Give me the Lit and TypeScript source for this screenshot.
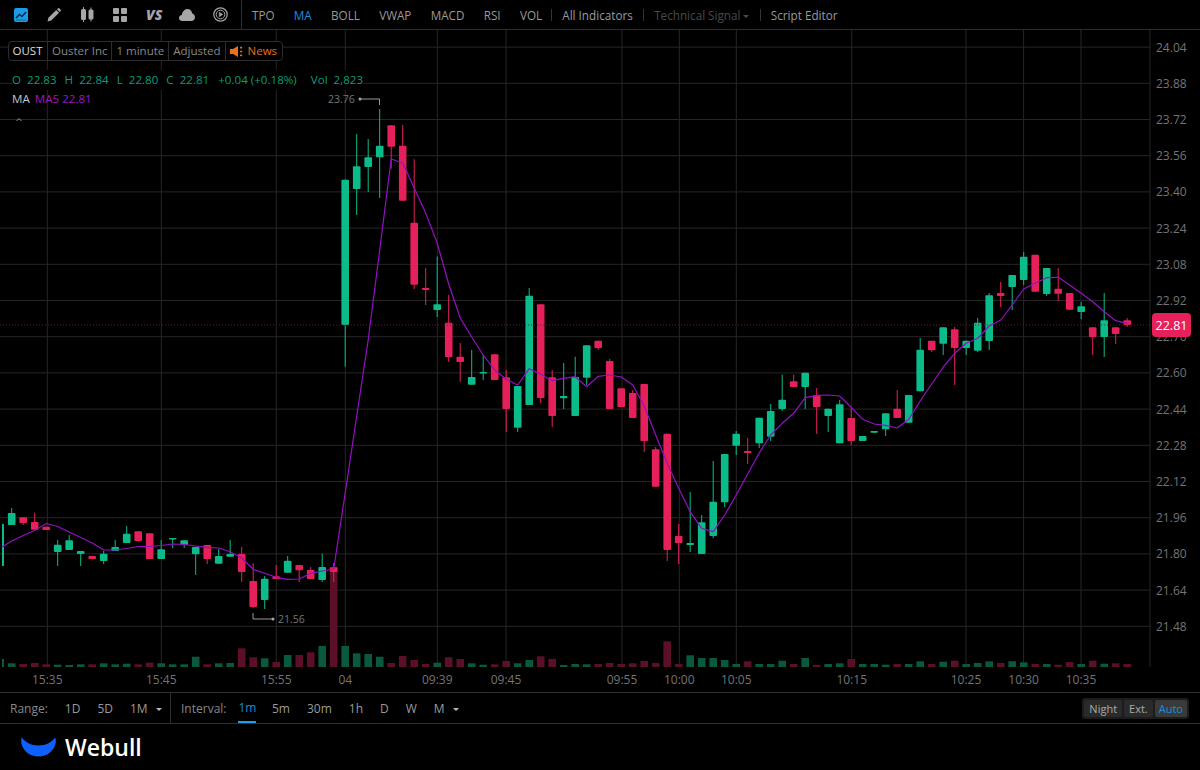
import { LitElement, css, html, svg } from 'lit'
import { customElement } from 'lit/decorators.js'

// bodyTop, bodyBottom, wickTop, wickBottom, colour: all read off the picture, in page pixels
type Candle = [number, number, number, number, 'g' | 'r']

const candles: Candle[] = [
  [524, 566, 524, 566, 'g'], [513, 525, 508, 525, 'g'], [517.3, 523, 517.3, 525, 'r'], [522, 529.7, 512.7, 529.7, 'r'],
  [526.7, 530, 526.7, 530, 'r'], [544.7, 552, 540, 566, 'g'], [540.3, 550, 535, 550, 'g'], [551, 554, 551, 566, 'g'],
  [556, 559, 556, 559, 'r'], [553.7, 561, 551, 564, 'g'], [547, 551, 540, 551, 'g'], [533.7, 543, 526, 543, 'g'],
  [531.3, 541, 531.3, 541, 'r'], [533.3, 559, 533.3, 559, 'r'], [549.3, 559, 540, 559, 'g'], [538, 539.5, 538, 548, 'g'],
  [540.3, 545, 540.3, 548, 'g'], [547, 554.3, 547, 575, 'g'], [545, 559, 545, 564, 'r'], [556, 563.7, 549, 563.7, 'g'],
  [554, 556.7, 540, 556.7, 'g'], [554, 572, 547, 582, 'r'], [581, 607, 563, 608, 'r'], [578.7, 600, 576, 609, 'g'],
  [576.3, 579, 565, 579, 'r'], [560.7, 572.7, 556, 572.7, 'g'], [565, 570.3, 565, 582, 'r'], [570, 579, 567, 579, 'r'],
  [567, 580, 553.7, 582, 'g'], [567.3, 572, 563, 582, 'r'], [179.7, 325, 179.7, 366.7, 'g'], [166.3, 189, 134, 215, 'g'],
  [157.3, 167, 139, 192, 'g'], [145.7, 157.3, 109, 198, 'g'], [125.3, 146.7, 125.3, 168.7, 'r'], [145.7, 200.7, 125, 200.7, 'r'],
  [222.7, 284.7, 159.3, 289, 'r'], [288, 290, 268, 305, 'r'], [304.3, 310, 256.7, 317, 'g'], [322.7, 357, 295, 362, 'r'],
  [356.7, 362, 343, 382, 'r'], [377, 384.7, 350, 384.7, 'g'], [372, 373.5, 354.7, 380, 'g'], [354.3, 380, 354.3, 380, 'r'],
  [377.3, 409, 370, 432, 'r'], [386, 427.7, 386, 432, 'g'], [295.7, 405, 288, 405, 'g'], [304.3, 398, 304.3, 403, 'r'],
  [377.3, 416, 370, 427, 'r'], [396, 398.3, 363, 409, 'g'], [377, 416, 356.7, 416, 'g'], [345.3, 377.7, 345.3, 385, 'g'],
  [340.7, 348, 340.7, 350, 'r'], [361, 409, 359, 409, 'r'], [388.3, 407, 388.3, 407, 'r'], [393, 418, 390, 418, 'r'],
  [384, 441, 384, 452, 'r'], [449.3, 486.7, 447, 486.7, 'r'], [433.7, 550, 433.7, 561, 'r'], [536, 543, 524, 564, 'r'],
  [543, 545, 492, 552, 'g'], [522.3, 554, 515, 554, 'g'], [501.7, 536, 461, 538, 'g'], [454, 502.3, 454, 507, 'g'],
  [433.7, 445.7, 431, 455, 'g'], [451, 453, 438, 464, 'r'], [417.7, 443.3, 417.7, 448, 'g'], [411, 436.7, 404, 441, 'g'],
  [399.7, 409, 374.7, 411, 'g'], [381.3, 387, 374.7, 387, 'r'], [372.7, 387, 372.7, 409, 'g'], [395.3, 407, 388, 434, 'r'],
  [408.7, 416, 408.7, 432, 'g'], [404.3, 443.3, 400, 443.3, 'g'], [418, 441, 407, 445, 'r'], [436, 441, 436, 441, 'g'],
  [431, 432.7, 431, 432.7, 'g'], [413.3, 429.3, 413.3, 436, 'g'], [408.7, 418, 390, 418, 'r'], [395, 422.7, 395, 422.7, 'g'],
  [349.7, 391.3, 338, 391.3, 'g'], [340.7, 350.3, 340.7, 352, 'r'], [327.3, 343.7, 327.3, 355, 'g'], [329.3, 348, 327, 385, 'r'],
  [340.7, 348, 340.7, 355, 'g'], [322.7, 350.7, 318, 352, 'g'], [295.3, 341, 293, 350, 'g'], [293, 296, 282, 307, 'r'],
  [275, 287, 275, 310, 'g'], [256.7, 280, 252, 285, 'g'], [254.7, 291.7, 254.7, 291.7, 'r'], [268, 294, 268, 296, 'g'],
  [288.7, 293.7, 268, 301, 'r'], [293, 309.7, 293, 309.7, 'r'], [306.3, 312, 302, 319, 'g'], [327.3, 337, 327.3, 355, 'r'],
  [320.3, 337, 293, 357, 'g'], [327.3, 334, 327.3, 344, 'r'], [320.3, 325, 318, 327, 'r'],
]

const maLine = [
  547, 541, 535.5, 530.5, 523.5, 526.5, 532, 537.5, 543, 550, 550, 548.5, 546.5, 546.5, 545.5, 544, 544.5, 546, 547.3, 548,
  551.7, 558, 569.3, 573.3, 577.3, 579.3, 579, 573.3, 571, 569, 493, 416, 340, 250, 159, 163, 188, 213, 243, 284,
  318, 337, 355, 370, 379.3, 385, 368.7, 374.3, 380.7, 378.3, 376.7, 386.7, 376.3, 375, 377, 385, 406, 435, 463.3, 488.3,
  511.7, 528.3, 531.7, 515, 495, 474, 453, 435, 423.3, 413.3, 397.7, 395.3, 395, 396, 407.3, 419.3, 424, 425.3, 428, 419.3,
  401, 384, 367, 353.3, 343.3, 338.3, 326, 320, 305, 289, 283.3, 277.7, 277.3, 285, 293.3, 301.7, 311.7, 320.7, 323.3,
]

// top of each volume bar, as page y
const volumes = [
  659, 663.3, 664, 663, 664.3, 664.7, 665, 664.3, 664.3, 663.3, 664.3, 663.7, 664.3, 662.7, 663.3, 664.3, 664.3, 656.7, 664.3, 663.3,
  663, 648.3, 657.3, 658.3, 662, 655, 655, 652.3, 646, 567, 646, 653.3, 654, 656.7, 663, 656, 660, 664, 662.7, 657.3,
  659, 663.3, 664.7, 664.3, 661, 663.3, 660, 656.3, 659, 665, 664, 664.3, 664, 663, 664, 663.3, 661, 663, 641.3, 664,
  655.3, 658, 658, 660, 664, 661.3, 664, 664, 660.7, 664, 658, 665, 664, 663.3, 659, 664, 664, 664.7, 664, 664,
  661.3, 664, 661.7, 660.7, 664, 663, 661.3, 663, 661.3, 662.3, 664, 664, 664.7, 662, 664, 660.7, 663.7, 663.3, 664,
]

const prices = ['24.04', '23.88', '23.72', '23.56', '23.40', '23.24', '23.08', '22.92', '22.76', '22.60', '22.44', '22.28', '22.12', '21.96', '21.80', '21.64', '21.48']
const times: [number, string][] = [
  [47.3, '15:35'], [161.3, '15:45'], [276.3, '15:55'], [345.3, '04'], [437.3, '09:39'], [506, '09:45'], [622, '09:55'],
  [679.3, '10:00'], [736.3, '10:05'], [851.7, '10:15'], [966, '10:25'], [1023.6, '10:30'], [1081, '10:35'],
]
const cx = (i: number) => 0.2 + 11.5 * i
const gridY = (i: number) => 47.1 + 36.2 * i

@customElement('price-chart')
class PriceChart extends LitElement {
  render() {
    const line = maLine.map((y, i) => `${i === 0 ? 2 : cx(i)},${y}`).join(' ')
    return html`
      <svg viewBox="0 30 1200 662" width="1200" height="662">
        <defs>
          <clipPath id="plot"><rect x="2" y="30" width="1148" height="640"></rect></clipPath>
        </defs>
        ${prices.map((_, i) => svg`<line class="grid" x1="0" x2="1150" y1=${gridY(i)} y2=${gridY(i)}></line>`)}
        ${times.map(([x]) => svg`<line class="grid" x1=${x} x2=${x} y1="30" y2="667"></line>`)}
        <line class="grid" x1="1150" x2="1150" y1="30" y2="667"></line>
        <g clip-path="url(#plot)">
          ${volumes.map(
            (top, i) => svg`<rect class=${candles[i][4] === 'g' ? 'vol-g' : 'vol-r'} x=${cx(i) - 3.8} y=${top} width="7.6" height=${667 - top}></rect>`
          )}
          ${candles.map(([t, b, wt, wb, c], i) => svg`
            <g class=${c === 'g' ? 'up' : 'down'}>
              <line x1=${cx(i)} x2=${cx(i)} y1=${wt} y2=${wb}></line>
              <rect x=${cx(i) - 3.8} y=${t} width="7.6" height=${b - t} rx="1"></rect>
            </g>`)}
        </g>
        <line class="last" x1="0" x2="1150" y1="325" y2="325"></line>
        <polyline class="ma" points=${line}></polyline>
        ${prices.map((p, i) => svg`<text class="tick" x="1156" y=${gridY(i) + 4.5}>${p}</text>`)}
        ${times.map(([x, t]) => svg`<text class="tick" x=${x} y="683.5" text-anchor="middle">${t}</text>`)}

        <text class="note" x="328" y="103">23.76</text>
        <circle class="dot" cx="360" cy="99" r="1.5"></circle>
        <path class="lead" d="M360 99H379.5V105"></path>
        <path class="lead" d="M253 613V619H273"></path>
        <circle class="dot" cx="273" cy="619" r="1.5"></circle>
        <text class="note" x="278" y="623">21.56</text>
        <path class="lead" d="M16.5 121L19 118.5L21.5 121"></path>

        <rect class="tag" x="1152" y="313" width="39" height="24" rx="4"></rect>
        <text class="tag-text" x="1171.5" y="330" text-anchor="middle">22.81</text>
      </svg>
    `
  }

  static styles = css`
    :host {
      display: block;
    }
    svg {
      display: block;
      font-family: 'Open Sans', sans-serif;
    }
    .grid {
      stroke: #262626;
      stroke-width: 1;
    }
    .vol-g {
      fill: #0a5840;
    }
    .vol-r {
      fill: #5c0f28;
    }
    .up {
      fill: #0bbb8a;
      stroke: #0bbb8a;
    }
    .down {
      fill: #e6205a;
      stroke: #e6205a;
    }
    .up rect,
    .down rect {
      stroke: none;
    }
    .last {
      stroke: #6b1a30;
      stroke-dasharray: 1 2;
    }
    .ma {
      fill: none;
      stroke: #9410c4;
      stroke-width: 1.2;
      stroke-linejoin: round;
    }
    .tick {
      fill: #747474;
      font-size: 12px;
    }
    .note {
      fill: #777;
      font-size: 10.5px;
    }
    .dot {
      fill: #aaa;
    }
    .lead {
      fill: none;
      stroke: #999;
      stroke-width: 1;
    }
    .tag {
      fill: #e6205a;
    }
    .tag-text {
      fill: #fff;
      font-size: 12.5px;
    }
  `
}

@customElement('app-root')
class AppRoot extends LitElement {
  render() {
    return html`
      <div class="page">
        <header class="toolbar">
          <div class="icons">
            <svg width="14" height="14" viewBox="0 0 14 14">
              <rect width="14" height="14" rx="2" fill="#1a9be8"></rect>
              <path d="M2 10L5.5 6.5L8 8.5L12 4" fill="none" stroke="#06283f" stroke-width="1.5"></path>
              <path d="M2 12H12" stroke="#06283f" stroke-width="0.8" opacity="0.5"></path>
            </svg>
            <svg width="14" height="14" viewBox="0 0 14 14" fill="#a6a6a6">
              <path d="M0.5 13.5L1.4 9.8L9.3 1.9L12.1 4.7L4.2 12.6Z"></path>
              <path d="M10 1.2L11 0.2Q11.6-0.2 12.2 0.3L13.7 1.8Q14.2 2.4 13.7 3L12.8 4Z"></path>
            </svg>
            <svg width="14" height="15" viewBox="0 0 14 15" fill="#a6a6a6">
              <rect x="1" y="2" width="5" height="11" rx="1.5"></rect>
              <rect x="3" y="0" width="1" height="15"></rect>
              <rect x="8.5" y="2.5" width="5" height="10" rx="1.5"></rect>
              <rect x="10.5" y="0.5" width="1" height="14"></rect>
            </svg>
            <svg width="14" height="14" viewBox="0 0 14 14" fill="#a6a6a6">
              <rect width="6" height="6" rx="1"></rect>
              <rect x="8" width="6" height="6" rx="1"></rect>
              <rect y="8" width="6" height="6" rx="1"></rect>
              <rect x="8" y="8" width="6" height="6" rx="1"></rect>
            </svg>
            <span class="vs">VS</span>
            <svg class="cloud" width="16" height="12" viewBox="0 0 16 12" fill="#a6a6a6">
              <path d="M3.4 12C1.3 12 0 10.6 0 8.9C0 7.3 1.2 6 2.8 5.9C3.4 2.6 5.6 0 8.4 0C11 0 12.9 1.9 13.3 4.4C14.9 4.9 16 6.4 16 8.2C16 10.3 14.4 12 12.2 12Z"></path>
            </svg>
            <svg width="15" height="15" viewBox="0 0 15 15" fill="none" stroke="#a6a6a6">
              <circle cx="7.5" cy="7.5" r="6.7" stroke-width="1.2"></circle>
              <circle cx="7.5" cy="7.5" r="4.3" stroke-width="1"></circle>
              <path d="M6.3 5.2V9.8L9.6 7.5Z" fill="#a6a6a6" stroke-width="0.6"></path>
            </svg>
          </div>
          <nav class="tabs">
            <span>TPO</span>
            <span class="on">MA</span>
            <span>BOLL</span>
            <span>VWAP</span>
            <span>MACD</span>
            <span>RSI</span>
            <span>VOL</span>
          </nav>
          <div class="menu">
            <span>All Indicators</span>
            <span class="off">Technical Signal<i class="caret"></i></span>
            <span>Script Editor</span>
          </div>
        </header>

        <section class="chart">
          <price-chart></price-chart>
          <div class="legend">
            <div class="chips">
              <span class="sym">OUST</span>
              <span>Ouster Inc</span>
              <span>1 minute</span>
              <span>Adjusted</span>
              <span class="news">
                <svg width="13" height="11" viewBox="0 0 13 11" fill="#e5711c">
                  <path d="M0 3H3L8 0V11L3 8H0Z"></path>
                  <rect x="10" y="0.8" width="2.2" height="1.6" rx="0.6"></rect>
                  <rect x="10" y="4.7" width="2.2" height="1.6" rx="0.6"></rect>
                  <rect x="10" y="8.6" width="2.2" height="1.6" rx="0.6"></rect>
                </svg>
                News
              </span>
            </div>
            <div class="ohlc">
              <span>O</span><span class="v1">22.83</span>
              <span class="k">H</span><span class="v1">22.84</span>
              <span class="k">L</span><span class="v1">22.80</span>
              <span class="k">C</span><span class="v1">22.81</span>
              <span class="chg">+0.04 (+0.18%)</span>
              <span class="vol">Vol</span><span class="v1">2,823</span>
            </div>
            <div class="ma-row"><span>MA</span><span class="ma5">MA5 22.81</span></div>
          </div>
        </section>

        <div class="ranges">
          <div class="range">
            <span class="label">Range:</span>
            <span>1D</span>
            <span>5D</span>
            <span>1M<i class="caret bright"></i></span>
          </div>
          <div class="interval">
            <span class="label">Interval:</span>
            <span class="on">1m</span>
            <span>5m</span>
            <span>30m</span>
            <span>1h</span>
            <span>D</span>
            <span>W</span>
            <span>M<i class="caret bright"></i></span>
          </div>
          <div class="modes">
            <span>Night</span>
            <span>Ext.</span>
            <span class="on">Auto</span>
          </div>
        </div>

        <footer class="brand">
          <svg width="35" height="20" viewBox="0 0 35 20" fill="#0f5fff">
            <path d="M1 0.5C4 5 10 8.5 17.5 8.5C25 8.5 31 5 34 0.5C35 2 35 5 34.5 7C32.5 14 26 19.5 17.5 19.5C9 19.5 2.5 14 0.5 7C0 5 0 2 1 0.5Z"></path>
          </svg>
          <span>Webull</span>
        </footer>
      </div>
    `
  }

  static styles = css`
    :host {
      display: block;
      width: 1200px;
      height: 770px;
      background: #000;
      font-family: 'Open Sans', sans-serif;
      font-size: 12px;
      color: #9a9a9a;
      overflow: hidden;
    }
    .page {
      display: flex;
      flex-direction: column;
      height: 770px;
    }
    .toolbar {
      height: 29px;
      display: flex;
      align-items: center;
      border-bottom: 1px solid #2e2e2e;
      font-size: 11.7px;
    }
    .icons {
      width: 242px;
      height: 29px;
      box-sizing: border-box;
      padding-left: 14px;
      display: flex;
      align-items: center;
      gap: 19px;
      border-right: 1px solid #2e2e2e;
    }
    .vs {
      font: italic 800 14px 'Open Sans', sans-serif;
      color: #a6a6a6;
      width: 16px;
      margin-right: -2px;
      white-space: nowrap;
    }
    .cloud {
      margin-right: -1px;
    }
    .tabs {
      display: flex;
      gap: 19.3px;
      padding-left: 10px;
    }
    .tabs .on {
      color: #1a8fdc;
    }
    .menu {
      display: flex;
      margin-left: 9px;
    }
    .menu span {
      padding: 0 10.2px;
      border-left: 1px solid #333;
      line-height: 12px;
    }
    .menu .off {
      color: #4a4a4a;
    }
    .caret {
      display: inline-block;
      width: 0;
      height: 0;
      margin-left: 3px;
      vertical-align: 2px;
      border-left: 3px solid transparent;
      border-right: 3px solid transparent;
      border-top: 3px solid #4a4a4a;
    }
    .caret.bright {
      margin-left: 8px;
      border-top-color: #bbb;
    }
    .chart {
      position: relative;
      height: 662px;
    }
    .legend {
      position: absolute;
      left: 8px;
      top: 11px;
      display: flex;
      flex-direction: column;
      align-items: flex-start;
    }
    .chips {
      display: flex;
      height: 20px;
      align-items: center;
      box-sizing: border-box;
      border: 1px solid #2c2c2c;
      border-radius: 4px;
      background: #000;
      font-size: 11.5px;
      color: #888;
    }
    .chips span {
      height: 18px;
      line-height: 18px;
      padding: 0 4px;
      border-left: 1px solid #2c2c2c;
      white-space: nowrap;
    }
    .chips span:first-child {
      border-left: none;
    }
    .chips .sym {
      color: #ddd;
      padding: 0 4.500px 0 3.500px;
    }
    .chips .news {
      color: #e5711c;
      display: flex;
      align-items: center;
      gap: 5px;
      padding-right: 5px;
    }
    .ohlc {
      display: flex;
      margin: 9px 0 0 4px;
      color: #0a9c78;
      height: 20px;
      line-height: 20px;
      font-size: 11.6px;
      background: #000;
    }
    .v1 {
      margin-left: 6px;
    }
    .k {
      margin-left: 8px;
    }
    .chg {
      margin-left: 9px;
    }
    .vol {
      margin-left: 14px;
    }
    .ma-row {
      display: flex;
      gap: 5px;
      margin: 0 0 0 4px;
      height: 18px;
      line-height: 18px;
      font-size: 11.6px;
      color: #c4c4c4;
    }
    .ma5 {
      color: #9a18c8;
    }
    .ranges {
      height: 30px;
      display: flex;
      align-items: center;
      border-top: 1px solid #2e2e2e;
      border-bottom: 1px solid #2e2e2e;
    }
    .range,
    .interval {
      display: flex;
      align-items: center;
      height: 30px;
    }
    .range {
      width: 171px;
      box-sizing: border-box;
      padding-left: 10px;
      gap: 17px;
      border-right: 1px solid #2e2e2e;
    }
    .interval {
      padding-left: 10px;
      gap: 17px;
    }
    .label {
      color: #888;
    }
    .interval .on {
      color: #1a8fdc;
      height: 30px;
      line-height: 30px;
      box-sizing: border-box;
      border-bottom: 2px solid #18a0e8;
      margin: 0 -1.5px 0 -5px;
    }
    .modes {
      margin-left: auto;
      margin-right: 11px;
      display: flex;
      gap: 2px;
      padding: 2px;
      background: #1c1c1c;
      border-radius: 3px;
      font-size: 11px;
      color: #aaa;
    }
    .modes span {
      padding: 0 5px;
      height: 17px;
      line-height: 17px;
      background: #2a2a2a;
      border-radius: 2px;
    }
    .modes .on {
      padding: 0 4px;
      background: #3a3a3a;
      color: #1a8fdc;
    }
    .brand {
      flex: 1;
      display: flex;
      align-items: center;
      gap: 9px;
      padding-left: 21px;
      color: #fff;
      font-size: 23px;
      font-weight: 600;
    }
  `
}
